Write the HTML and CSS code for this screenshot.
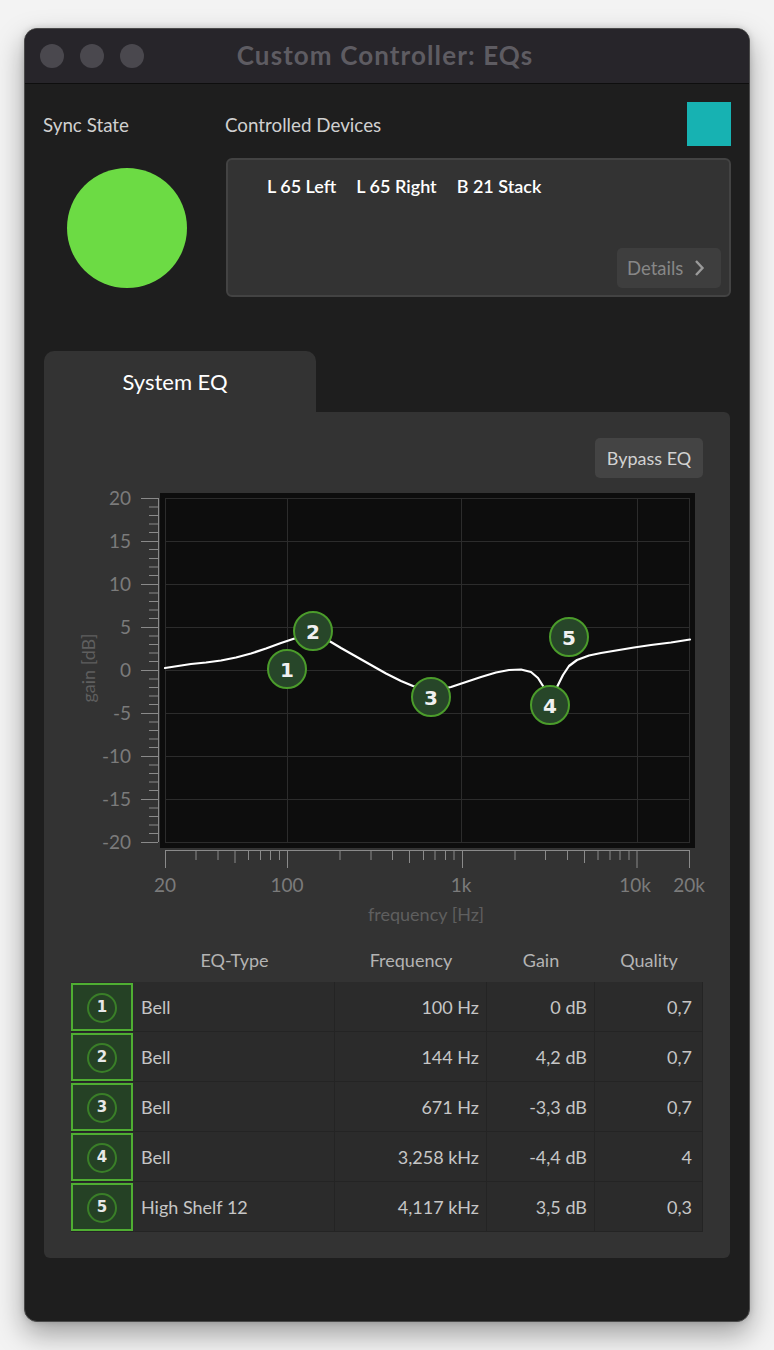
FILE: index.html
```html
<!DOCTYPE html>
<html>
<head>
<meta charset="utf-8">
<link rel="stylesheet" href="styles.css">
</head>
<body>
<div class="window">
  <div class="titlebar">
    <div class="lights"><span class="light"></span><span class="light"></span><span class="light"></span></div>
    <div class="title">Custom Controller: EQs</div>
  </div>
  <div class="content">
    <div class="top">
      <div class="label sync-label">Sync State</div>
      <div class="dev-head">
        <div class="label">Controlled Devices</div>
        <div class="teal"></div>
      </div>
      <div class="sync-dot"></div>
      <div class="devices">
        <div class="dev-list"><span>L 65 Left</span><span>L 65 Right</span><span>B 21 Stack</span></div>
        <div class="details">Details
          <svg class="chev" width="12" height="18" viewBox="0 0 12 18"><path d="M3 2 L9.5 9 L3 16" fill="none" stroke="#9a9a9a" stroke-width="2.4"/></svg>
        </div>
      </div>
    </div>

    <div class="section">
      <div class="tab">System EQ</div>
      <div class="panel">
        <div class="bypass-row"><div class="bypass">Bypass EQ</div></div>
        <svg class="chart" width="688" height="445" viewBox="0 0 688 445">
          <g transform="translate(-43,-485)">
            <rect x="159" y="493" width="535" height="355" fill="#0d0d0d"/>
            <g stroke="#2c2c2c" stroke-width="1" fill="none">
              <rect x="164.5" y="498.5" width="524" height="344"/>
              <path d="M164 541.5H688 M164 584.5H688 M164 627.5H688 M164 670.5H688 M164 713.5H688 M164 756.5H688 M164 799.5H688"/>
              <path d="M286.5 498V842 M460.5 498V842 M636.5 498V842"/>
            </g>
            <g stroke="#8a8a8a" stroke-width="1" fill="none">
              <path d="M157.5 498V842"/>
              <path d="M140 498.5H157 M140 541.5H157 M140 584.5H157 M140 627.5H157 M140 670.5H157 M140 713.5H157 M140 756.5H157 M140 799.5H157 M140 842.5H157"/>
              <path d="M148 507H157 M148 515.5H157 M148 524H157 M148 532.5H157 M148 549.5H157 M148 558.5H157 M148 567H157 M148 575.5H157 M148 593H157 M148 601.5H157 M148 610H157 M148 618.5H157 M148 636H157 M148 644.5H157 M148 653H157 M148 661.5H157 M148 679H157 M148 687.5H157 M148 696H157 M148 704.5H157 M148 722H157 M148 730.5H157 M148 739H157 M148 747.5H157 M148 765H157 M148 773.5H157 M148 782H157 M148 790.5H157 M148 808H157 M148 816.5H157 M148 825H157 M148 833.5H157"/>
            </g>
            <g class="axis-txt" text-anchor="end">
              <text x="130" y="505">20</text>
              <text x="130" y="548">15</text>
              <text x="130" y="591">10</text>
              <text x="130" y="634">5</text>
              <text x="130" y="677">0</text>
              <text x="130" y="720">-5</text>
              <text x="130" y="763">-10</text>
              <text x="130" y="806">-15</text>
              <text x="130" y="849">-20</text>
            </g>
            <text class="axis-name" transform="translate(94,668) rotate(-90)" text-anchor="middle">gain [dB]</text>
            <g stroke="#8a8a8a" stroke-width="1" fill="none">
              <path d="M164 850.5H689"/>
              <path d="M164.5 850V868 M286.5 850V868 M461.5 850V868 M636 850V868 M688.5 850V868"/>
              <path d="M234 850V863 M408.5 850V863 M583.5 850V863"/>
              <path d="M195 850V860 M217 850V860 M247.5 850V860 M259.5 850V860 M269.5 850V860 M278.5 850V860 M339 850V860 M370 850V860 M391.5 850V860 M422.5 850V860 M434 850V860 M444.5 850V860 M453 850V860 M514 850V860 M544.5 850V860 M566.5 850V860 M597 850V860 M609 850V860 M619 850V860 M628 850V860"/>
            </g>
            <g class="axis-txt" text-anchor="middle">
              <text x="164" y="892">20</text>
              <text x="286" y="892">100</text>
              <text x="460" y="892">1k</text>
              <text x="634" y="892">10k</text>
              <text x="688" y="892">20k</text>
            </g>
            <text class="axis-name" x="425" y="921" text-anchor="middle">frequency [Hz]</text>
            <path d="M164 668 L177 666 L190 664 L205 662.5 L220 660.5 L235 657.5 L250 653.5 L265 648.5 L280 643 L295 638 L305 635.5 L315 635 L325 639 L340 648 L355 656.5 L370 665 L385 673.5 L400 681 L412 686 L425 689 L438 689.5 L450 687 L465 682 L480 677 L495 672.5 L508 670 L520 669.5 L530 672 L537 678 L542 686 L545 693 M553 693 L557 685 L562 675 L568 666 L576 660 L588 655.5 L600 653 L615 650.5 L633 647.5 L650 645 L670 642.5 L689 639.5" fill="none" stroke="#ffffff" stroke-width="2.2" stroke-linejoin="round" stroke-linecap="round"/>
            <g class="node">
              <circle cx="286" cy="669" r="19"/><text x="286" y="676.5">1</text>
              <circle cx="312" cy="631" r="19"/><text x="312" y="638.5">2</text>
              <circle cx="430" cy="697" r="19"/><text x="430" y="704.5">3</text>
              <circle cx="549" cy="705" r="19"/><text x="549" y="712.5">4</text>
              <circle cx="568" cy="637" r="19"/><text x="568" y="644.5">5</text>
            </g>
          </g>
        </svg>

        <div class="table">
          <div class="th"></div><div class="th">EQ-Type</div><div class="th">Frequency</div><div class="th">Gain</div><div class="th">Quality</div>

          <div class="idx"><span class="badge">1</span></div><div class="td left">Bell</div><div class="td">100 Hz</div><div class="td">0 dB</div><div class="td q">0,7</div>
          <div class="idx"><span class="badge">2</span></div><div class="td left">Bell</div><div class="td">144 Hz</div><div class="td">4,2 dB</div><div class="td q">0,7</div>
          <div class="idx"><span class="badge">3</span></div><div class="td left">Bell</div><div class="td">671 Hz</div><div class="td">-3,3 dB</div><div class="td q">0,7</div>
          <div class="idx"><span class="badge">4</span></div><div class="td left">Bell</div><div class="td">3,258 kHz</div><div class="td">-4,4 dB</div><div class="td q">4</div>
          <div class="idx"><span class="badge">5</span></div><div class="td left">High Shelf 12</div><div class="td">4,117 kHz</div><div class="td">3,5 dB</div><div class="td q">0,3</div>
        </div>
      </div>
    </div>
  </div>
</div>
</body>
</html>
```
FILE: styles.css
```css
html, body {
  margin: 0;
  padding: 0;
}
body {
  background: #f3f3f3;
  width: 774px;
  height: 1350px;
  overflow: hidden;
  font-family: "Lato", "Noto Sans", sans-serif;
}
.window {
  margin: 28px 0 0 24px;
  width: 726px;
  height: 1294px;
  box-sizing: border-box;
  border: 1px solid #4a4a4a;
  border-radius: 13px;
  background: #1e1e1e;
  overflow: hidden;
  box-shadow: 0 12px 28px rgba(0,0,0,0.35), 0 0 6px rgba(0,0,0,0.15);
  display: flex;
  flex-direction: column;
}
.titlebar {
  height: 54px;
  flex: none;
  background: #27252a;
  border-bottom: 1px solid #0e0e0e;
  position: relative;
  display: flex;
  align-items: center;
}
.lights {
  display: flex;
  gap: 16px;
  padding-left: 15px;
}
.light {
  width: 24px;
  height: 24px;
  border-radius: 50%;
  background: #4a484e;
}
.title {
  position: absolute;
  left: 0;
  right: 0;
  top: 0;
  bottom: 0;
  display: flex;
  align-items: center;
  justify-content: center;
  font-weight: 700;
  font-size: 26px;
  letter-spacing: 1.1px;
  color: #5e5c62;
  padding-right: 4px;
  padding-bottom: 2px;
}
.content {
  padding: 18px 18px 0 18px;
}
.top {
  display: grid;
  grid-template-columns: 182px 1fr;
  grid-template-rows: 44px auto;
}
.label {
  font-size: 18.8px;
  color: #d0d0d0;
}
.sync-label {
  align-self: center;
}
.dev-head {
  display: flex;
  justify-content: space-between;
  align-items: center;
}
.teal {
  width: 44px;
  height: 44px;
  background: #17b2b2;
}
.sync-dot {
  margin: 22px 0 0 24px;
  width: 120px;
  height: 120px;
  border-radius: 50%;
  background: #6cdb44;
}
.devices {
  margin-top: 12px;
  margin-left: 1px;
  height: 139px;
  box-sizing: border-box;
  border: 2px solid #434343;
  border-radius: 6px;
  background: #333333;
  display: flex;
  flex-direction: column;
  justify-content: space-between;
  padding: 15px 8px 7px 39px;
}
.dev-list {
  display: flex;
  gap: 20px;
  font-size: 18px;
  font-weight: 600;
  color: #ffffff;
}
.details {
  align-self: flex-end;
  width: 104px;
  height: 40px;
  box-sizing: border-box;
  border-radius: 5px;
  background: #3e3e3e;
  color: #878787;
  font-size: 18.5px;
  display: flex;
  align-items: center;
  padding-left: 10px;
  gap: 10px;
}
.section {
  margin: 54px 1px 0 1px;
}
.tab {
  width: 272px;
  height: 61px;
  background: #333333;
  border-radius: 10px 10px 0 0;
  color: #ffffff;
  font-size: 22px;
  display: flex;
  align-items: center;
  justify-content: center;
  padding-right: 10px;
  box-sizing: border-box;
}
.panel {
  background: #333333;
  border-radius: 0 6px 6px 6px;
  height: 846px;
  box-sizing: border-box;
  padding-top: 26px;
}
.bypass-row {
  display: flex;
  justify-content: flex-end;
  padding-right: 27px;
}
.bypass {
  width: 108px;
  height: 40px;
  border-radius: 5px;
  background: #444444;
  color: #d2d2d2;
  font-size: 18px;
  display: flex;
  align-items: center;
  justify-content: center;
}
.chart {
  display: block;
  margin-top: 7px;
}
.axis-txt text {
  font-size: 19px;
  fill: #7b7b7b;
  font-family: "Lato", "Noto Sans", sans-serif;
}
.axis-name {
  font-size: 18px;
  fill: #5f5f5f;
  font-family: "Lato", "Noto Sans", sans-serif;
}
.node circle {
  fill: #274629;
  stroke: #4b9c2b;
  stroke-width: 2;
}
.node text {
  fill: #f0f0f0;
  font-size: 20px;
  font-weight: 700;
  text-anchor: middle;
  font-family: "DejaVu Sans", sans-serif;
}
.table {
  margin: 15px 0 0 27px;
  display: grid;
  grid-template-columns: 63px 201px 152px 108px 108px;
  grid-auto-rows: 50px;
  grid-template-rows: 37px;
  width: 632px;
}
.th {
  font-size: 18px;
  color: #b4b4b4;
  display: flex;
  align-items: center;
  justify-content: center;
  padding-bottom: 7px;
}
.idx {
  display: flex;
  align-items: center;
  padding: 1px 0;
  box-sizing: border-box;
  background: #2b2b2b;
  border-bottom: 1px solid #242424;
}
.badge {
  width: 62px;
  height: 48px;
  box-sizing: border-box;
  border: 2px solid #4fae32;
  background: #254125;
  display: flex;
  align-items: center;
  justify-content: center;
  color: #e8e8e8;
  font-family: "DejaVu Sans", sans-serif;
  font-weight: 700;
  font-size: 15px;
  position: relative;
}
.badge::before {
  content: "";
  position: absolute;
  left: 14px;
  top: 8px;
  width: 26px;
  height: 26px;
  border: 2px solid #3a7f28;
  border-radius: 50%;
}
.td {
  background: #2b2b2b;
  border-right: 1px solid #242424;
  border-bottom: 1px solid #242424;
  font-size: 18px;
  color: #c6c6c6;
  display: flex;
  align-items: center;
  justify-content: flex-end;
  padding: 0 7px;
}
.td.left {
  justify-content: flex-start;
  border-left: 1px solid #2b2b2b;
  padding-left: 6px;
}
.td.q {
  padding-right: 10px;
}
```
